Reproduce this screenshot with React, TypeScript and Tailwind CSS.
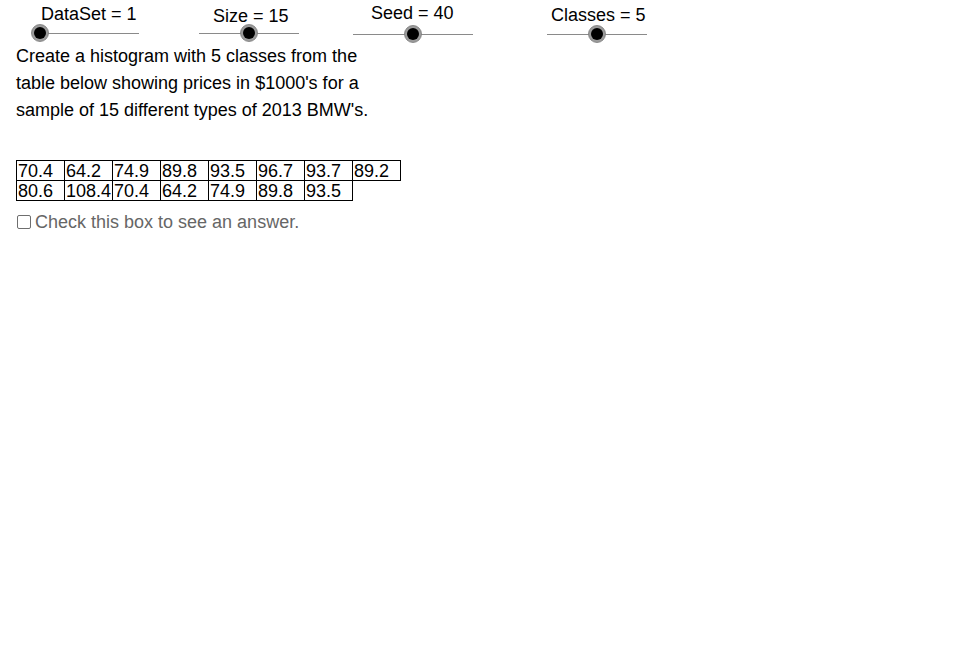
const values = [
  ["70.4", "64.2", "74.9", "89.8", "93.5", "96.7", "93.7", "89.2"],
  ["80.6", "108.4", "70.4", "64.2", "74.9", "89.8", "93.5"],
];

type SliderProps = {
  label: string;
  labelX: number;
  labelY: number;
  x1: number;
  x2: number;
  y: number;
  knob: number;
};

// GeoGebra style slider drawn on the applet canvas
function Slider({ label, labelX, labelY, x1, x2, y, knob }: SliderProps) {
  return (
    <>
      <div
        className="absolute text-[18px] leading-[18px] text-black whitespace-nowrap"
        style={{ left: labelX, top: labelY }}
      >
        {label}
      </div>
      <div
        className="absolute h-px bg-[#8a8a8a]"
        style={{ left: x1, top: y, width: x2 - x1 }}
      />
      <svg
        className="absolute"
        width="20"
        height="20"
        viewBox="0 0 20 20"
        style={{ left: knob - 10, top: y - 10 }}
      >
        <circle cx="10" cy="10" r="8.5" fill="#9b9b9b" stroke="#7a7a7a" strokeWidth="0.8" />
        <circle cx="10" cy="10" r="6" fill="#000" />
      </svg>
    </>
  );
}

export default function App() {
  return (
    <div className="relative w-[971px] h-[647px] bg-white overflow-hidden font-['Liberation_Sans',Arial,sans-serif]">
      <Slider label="DataSet = 1" labelX={41} labelY={5} x1={40} x2={139} y={33} knob={40} />
      <Slider label="Size = 15" labelX={213} labelY={7} x1={199} x2={299} y={33} knob={249} />
      <Slider label="Seed = 40" labelX={371} labelY={4} x1={353} x2={473} y={34} knob={413} />
      <Slider label="Classes = 5" labelX={551} labelY={6} x1={547} x2={647} y={34} knob={597} />

      <div className="pl-4 pt-[43px]">
        <p className="text-[18px] leading-[27px] text-black">
          <span className="block">Create a histogram with 5 classes from the</span>
          <span className="block">table below showing prices in $1000's for a</span>
          <span className="block">sample of 15 different types of 2013 BMW's.</span>
        </p>

        <div className="mt-[36px] flex flex-col">
          {values.map((row, r) => (
            <div key={r} className={r > 0 ? "flex -mt-px" : "flex"}>
              {row.map((v, c) => (
                <div
                  key={c}
                  className={
                    "w-[49px] h-[21px] border border-black pl-px text-[18px] leading-[21px] text-black overflow-visible whitespace-nowrap" +
                    (c > 0 ? " -ml-px" : "")
                  }
                >
                  {v}
                </div>
              ))}
            </div>
          ))}
        </div>

        <label className="mt-[11px] flex items-center gap-[4px] text-[18px] leading-[20px] text-[#666]">
          <span className="ml-px w-[14px] h-[14px] rounded-[2px] border border-[#6e6e6e] bg-white" />
          <span>Check this box to see an answer.</span>
        </label>
      </div>
    </div>
  );
}
